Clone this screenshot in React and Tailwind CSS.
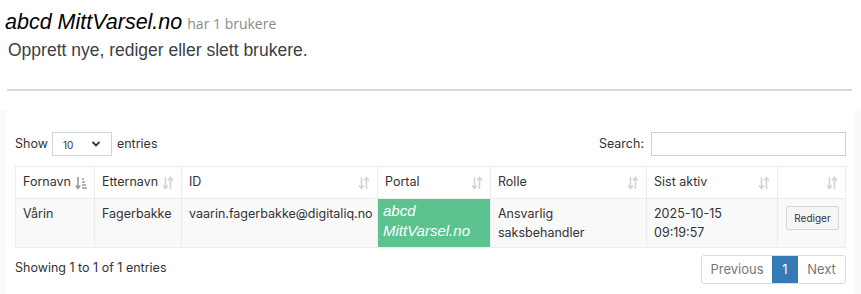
import React from "react";

const SortBoth = () => (
  <svg width="12" height="14" viewBox="0 0 12 14" className="shrink-0">
    <path d="M3.5 1v11M1 9.5l2.5 3 2.5-3" stroke="#d4d4d4" strokeWidth="1.6" fill="none" />
    <path d="M8.5 13V2M6 4.5l2.5-3 2.5 3" stroke="#d4d4d4" strokeWidth="1.6" fill="none" />
  </svg>
);

const SortAsc = () => (
  <svg width="12" height="14" viewBox="0 0 12 14" className="shrink-0">
    <path d="M3 1v11M0.8 9.5l2.2 3 2.2-3" stroke="#9a9a9a" strokeWidth="1.6" fill="none" />
    <path d="M7 3h2M7 6h3M7 9h4M7 12h5" stroke="#9a9a9a" strokeWidth="1.3" fill="none" />
  </svg>
);

const cols = [
  { label: "Fornavn", w: "w-[79px]", icon: <SortAsc /> },
  { label: "Etternavn", w: "w-[87px]", icon: <SortBoth /> },
  { label: "ID", w: "w-[196px]", icon: <SortBoth /> },
  { label: "Portal", w: "w-[113px]", icon: <SortBoth /> },
  { label: "Rolle", w: "w-[156px]", icon: <SortBoth /> },
  { label: "Sist aktiv", w: "w-[131px]", icon: <SortBoth /> },
  { label: "", w: "w-[68px]", icon: <SortBoth /> },
];

export default function App() {
  return (
    <div className="w-[861px] h-[294px] bg-white overflow-hidden text-[#333]">
      <div className="px-[5px] pt-[9px]">
        <div className="flex items-baseline">
          <span className="italic text-[21.5px] leading-[26px] text-black font-['Liberation_Sans',Arial,sans-serif]">
            abcd MittVarsel.no
          </span>
          <span className="ml-[5px] text-[14px] text-[#8a8a8a] font-['Open_Sans',sans-serif]">har 1 brukere</span>
        </div>
        <div className="pl-[3px] mt-[3px] text-[17.5px] leading-[24px] text-[#3b3f45] font-['Liberation_Sans',Arial,sans-serif]">
          Opprett nye, rediger eller slett brukere.
        </div>
      </div>
      <div className="mt-[27px] ml-[7px] mr-[9px] h-[2px] bg-[#d8d8e0]"></div>
      <div className="mt-[19px] bg-[#fafafa] px-[7px] h-[200px]">
        <div className="bg-white h-full px-[8px] pt-[22px] font-['Inter',sans-serif] text-[12.5px] text-[#333]">
          <div className="flex items-center justify-between h-[24px]">
            <div className="flex items-center">
              <span>Show</span>
              <div className="ml-[4px] mr-[5px] w-[60px] h-[24px] border border-[#d0d3dc] flex items-center justify-between px-[10px]">
                <span className="text-[10px] text-[#333] mt-[2px]">10</span>
                <svg width="10" height="8" viewBox="0 0 10 8">
                  <path d="M1.5 2l3.5 3.5L8.5 2" stroke="#333" strokeWidth="1.8" fill="none" />
                </svg>
              </div>
              <span>entries</span>
            </div>
            <div className="flex items-center">
              <span className="mr-[7px]">Search:</span>
              <div className="w-[195px] h-[24px] border border-[#ccd0dc]"></div>
            </div>
          </div>
          <table className="mt-[10px] border-collapse table-fixed w-[830px]">
            <thead>
              <tr className="h-[32px]">
                {cols.map((c, i) => (
                  <th key={i} className={`${c.w} border border-[#ececec] font-normal text-left px-[7px] py-0`}>
                    <div className="flex items-center justify-between">
                      <span>{c.label}</span>
                      {c.icon}
                    </div>
                  </th>
                ))}
              </tr>
            </thead>
            <tbody>
              <tr className="h-[49px] bg-[#f9f9f9] align-top leading-[19px]">
                <td className="border border-[#ececec] px-[7px] pt-[5px]">Vårin</td>
                <td className="border border-[#ececec] px-[7px] pt-[5px]">Fagerbakke</td>
                <td className="border border-[#ececec] px-[7px] pt-[5px]">vaarin.fagerbakke@digitaliq.no</td>
                <td className="border border-[#ececec] bg-[#5cc28f] px-[5px] pt-[2px] italic text-white text-[15px] leading-[20px] font-['Liberation_Sans',Arial,sans-serif]">
                  abcd<br />MittVarsel.no
                </td>
                <td className="border border-[#ececec] px-[7px] pt-[5px]">Ansvarlig<br />saksbehandler</td>
                <td className="border border-[#ececec] px-[7px] pt-[5px]">2025-10-15<br />09:19:57</td>
                <td className="border border-[#ececec] px-[7px] pt-[7px]">
                  <div className="ml-[1px] w-[53px] h-[24px] border border-[#d6d6d6] rounded-[2px] bg-[#f5f5f5] flex items-center justify-center text-[10px]">
                    Rediger
                  </div>
                </td>
              </tr>
            </tbody>
          </table>
          <div className="flex items-start justify-between mt-[7px]">
            <div className="mt-[4px]">Showing 1 to 1 of 1 entries</div>
            <div className="flex h-[29px] border border-[#dddddd] rounded-[3px] overflow-hidden text-[13px]">
              <div className="w-[70px] flex items-center justify-center text-[#777]">Previous</div>
              <div className="w-[26px] flex items-center justify-center bg-[#337ab7] text-white">1</div>
              <div className="w-[47px] flex items-center justify-center text-[#777]">Next</div>
            </div>
          </div>
        </div>
      </div>
    </div>
  );
}
